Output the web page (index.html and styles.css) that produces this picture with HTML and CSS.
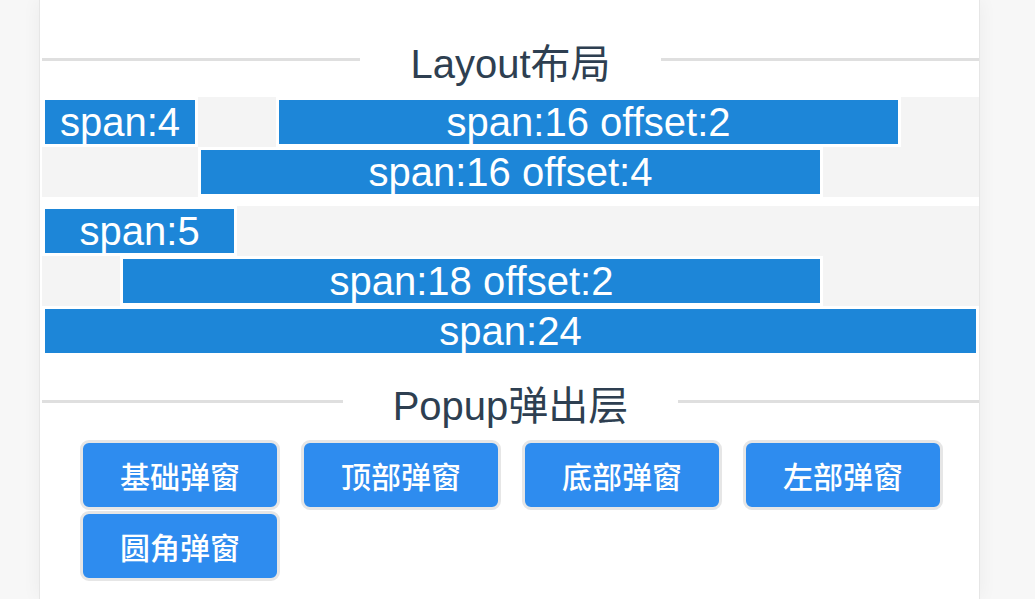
FILE: index.html
```html
<!DOCTYPE html>
<html lang="zh-CN">
<head>
<meta charset="utf-8">
<title>Layout</title>
<link rel="stylesheet" href="styles.css">
</head>
<body>
<div class="page">
  <div class="content">
    <div class="divider divider-first">
      <span class="divider-line"></span>
      <span class="divider-text">Layout布局</span>
      <span class="divider-line"></span>
    </div>

    <div class="row">
      <div class="col span-4">span:4</div>
      <div class="col span-16 offset-2">span:16 offset:2</div>
      <div class="col span-16 offset-4">span:16 offset:4</div>
    </div>

    <div class="row row-second">
      <div class="col span-5">span:5</div>
      <div class="col span-18 offset-2">span:18 offset:2</div>
      <div class="col span-24">span:24</div>
    </div>

    <div class="divider divider-popup">
      <span class="divider-line"></span>
      <span class="divider-text">Popup弹出层</span>
      <span class="divider-line"></span>
    </div>

    <div class="buttons">
      <button class="btn">基础弹窗</button>
      <button class="btn">顶部弹窗</button>
      <button class="btn">底部弹窗</button>
      <button class="btn">左部弹窗</button>
      <button class="btn">圆角弹窗</button>
    </div>
  </div>
</div>
</body>
</html>
```

FILE: styles.css
```css
html, body {
  margin: 0;
  padding: 0;
}

body {
  background: #f7f7f7;
  font-family: "Liberation Sans", Arial, "Noto Sans CJK SC", sans-serif;
  overflow: hidden;
}

.page {
  box-sizing: border-box;
  margin-left: 39px;
  width: 941px;
  height: 100vh;
  background: #ffffff;
  border-left: 1px solid #e6e6e6;
  border-right: 1px solid #e6e6e6;
  box-shadow: 0 0 18px rgba(0, 0, 0, 0.05);
  overflow: hidden;
}

.content {
  padding-top: 34px;
  padding-left: 2px;
}

/* Divider */
.divider {
  display: flex;
  align-items: center;
  height: 50px;
}

.divider-first {
  margin-bottom: 13px;
}

.divider-popup {
  margin-top: 20px;
  margin-bottom: 14px;
}

.divider-line {
  flex: 1;
  height: 3px;
  background: #dfdfdf;
}

.divider-text {
  padding: 10px 50px 0;
  font-size: 40px;
  line-height: 40px;
  color: #2e3f51;
  white-space: nowrap;
}

/* Grid */
.row {
  display: flex;
  flex-wrap: wrap;
  background: #f4f4f4;
}

.row-second {
  margin-top: 9px;
}

.col {
  box-sizing: border-box;
  height: 50px;
  border: 3px solid #ffffff;
  background: #1d86d8;
  color: #ffffff;
  font-size: 40px;
  line-height: 44px;
  text-align: center;
  white-space: nowrap;
}

.span-4 { width: calc(100% * 4 / 24); }
.span-5 { width: calc(100% * 5 / 24); }
.span-16 { width: calc(100% * 16 / 24); }
.span-18 { width: calc(100% * 18 / 24); }
.span-24 { width: 100%; }

.offset-2 { margin-left: calc(100% * 2 / 24); }
.offset-4 { margin-left: calc(100% * 4 / 24); }

/* Buttons */
.buttons {
  display: flex;
  flex-wrap: wrap;
  column-gap: 21px;
  row-gap: 1px;
  padding-left: 38px;
}

.btn {
  box-sizing: border-box;
  width: 200px;
  height: 70px;
  margin: 0;
  padding: 0;
  border: 3px solid #e6e6e6;
  border-radius: 9px;
  background: #2e8cef;
  color: #ffffff;
  font-family: "Noto Sans CJK SC", sans-serif;
  font-size: 30px;
  font-weight: 500;
  line-height: 64px;
  text-align: center;
  cursor: pointer;
}
```
